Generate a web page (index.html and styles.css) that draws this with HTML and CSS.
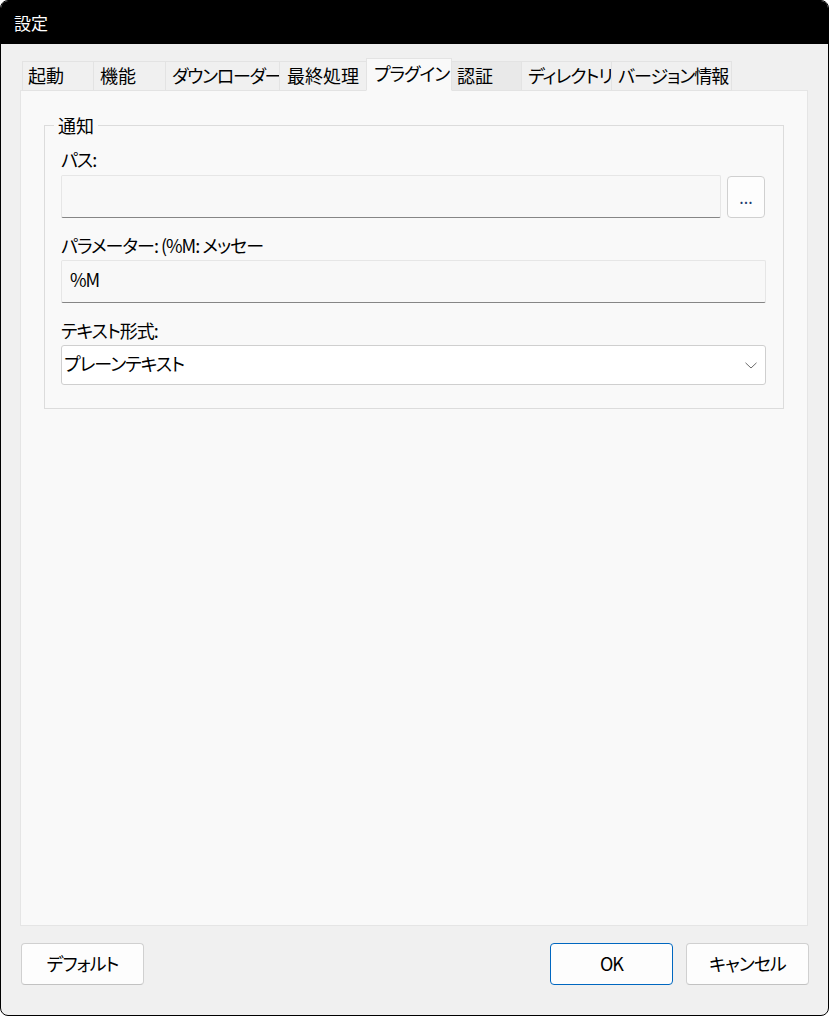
FILE: index.html
```html
<!DOCTYPE html>
<html lang="ja">
<head>
<meta charset="utf-8">
<title>設定</title>
<link rel="stylesheet" href="styles.css">
</head>
<body>
<div class="window">
  <div class="titlebar">設定</div>
  <div class="content">
    <div class="tabstrip">
      <div class="tab t1">起動</div>
      <div class="tab t2">機能</div>
      <div class="tab t3">ダウンローダー</div>
      <div class="tab t4">最終処理</div>
      <div class="tab t5 selected">プラグイン</div>
      <div class="tab t6 hover">認証</div>
      <div class="tab t7">ディレクトリ</div>
      <div class="tab t8">バージョン情報</div>
    </div>
    <div class="panel">
      <fieldset class="group">
        <legend class="legend">通知</legend>
        <div class="label first">パス:</div>
        <div class="row">
          <div class="field path"></div>
          <div class="browse">...</div>
        </div>
        <div class="label">パラメーター: (%M: メッセー</div>
        <div class="field">%M</div>
        <div class="label">テキスト形式:</div>
        <div class="combo">
          <span class="combo-text">プレーンテキスト</span>
          <svg class="chevron" width="12" height="7" viewBox="0 0 12 7"><path d="M0.5 0.8 L6 6 L11.5 0.8" fill="none" stroke="#6b6b6b" stroke-width="1"/></svg>
        </div>
      </fieldset>
    </div>
    <div class="buttons">
      <div class="btn">デフォルト</div>
      <div class="spacer"></div>
      <div class="btn primary">OK</div>
      <div class="btn">キャンセル</div>
    </div>
  </div>
</div>
</body>
</html>
```

FILE: styles.css
```css
html, body {
  margin: 0;
  padding: 0;
  background: #ffffff;
}
body {
  font-family: "Noto Sans CJK JP", "Noto Sans", sans-serif;
  font-feature-settings: "palt";
  letter-spacing: -1px;
  color: #000;
}
.window {
  width: 829px;
  height: 1016px;
  box-sizing: border-box;
  border: 1px solid #000;
  border-radius: 8px;
  overflow: hidden;
  display: flex;
  flex-direction: column;
  background: #f0f0f0;
}
.titlebar {
  height: 43px;
  flex: none;
  background: #000;
  color: #fff;
  font-size: 17px;
  letter-spacing: 0;
  line-height: 43px;
  padding-left: 13px;
}
.content {
  flex: 1;
  display: flex;
  flex-direction: column;
  padding: 14px 20px 30px 19px;
  min-height: 0;
}
.tabstrip {
  display: flex;
  align-items: flex-end;
  margin-left: 2px;
  margin-bottom: -1px;
  position: relative;
  z-index: 1;
  height: 33px;
}
.tab {
  box-sizing: border-box;
  height: 30px;
  margin-right: -1px;
  border: 1px solid #e3e3e3;
  background: #f0f0f0;
  font-size: 18px;
  line-height: 27px;
  padding-left: 6px;
  white-space: nowrap;
}
.tab.hover { background: #e9e9e9; }
.tab.selected {
  height: 33px;
  background: #f9f9f9;
  border-bottom-color: #f9f9f9;
  line-height: 29px;
  position: relative;
  z-index: 2;
}
.t1 { width: 72px; padding-left: 5px; letter-spacing: 0; }
.t2 { width: 73px; padding-left: 6px; letter-spacing: 0; }
.t3 { width: 115px; padding-left: 6px; letter-spacing: -1.3px; }
.t4 { width: 88px; padding-left: 7px; letter-spacing: 0; }
.t5 { width: 86px; padding-left: 7px; }
.t6 { width: 71px; padding-left: 5px; letter-spacing: 0; }
.t7 { width: 91px; padding-left: 6px; }
.t8 { width: 121px; padding-left: 6px; }
.panel {
  flex: 1;
  background: #f9f9f9;
  border: 1px solid #e5e5e5;
  display: flex;
  flex-direction: column;
}
.group {
  margin: 22px 23px 0 23px;
  border: 1px solid #dcdcdc;
  padding: 0 17px 23px 16px;
  display: flex;
  flex-direction: column;
  min-width: 0;
}
.legend {
  font-size: 18px;
  letter-spacing: 0;
  line-height: 24px;
  padding: 0 4px;
  margin-left: -7px;
}
.label {
  font-size: 18px;
  line-height: 24px;
  margin-top: 15px;
  margin-bottom: 3px;
  white-space: nowrap;
}
.label.first {
  margin-top: 10px;
  margin-bottom: 4px;
}
.row {
  display: flex;
  gap: 6px;
  align-items: center;
}
.field {
  box-sizing: border-box;
  height: 43px;
  background: #f8f8f8;
  border: 1px solid #e6e6e6;
  border-bottom-color: #868686;
  border-radius: 2px;
  font-size: 18px;
  line-height: 24px;
  padding: 4px 8px 0 8px;
  display: flex;
  align-items: center;
  padding-bottom: 9px;
}
.field.path { flex: 1; }
.browse {
  box-sizing: border-box;
  width: 38px;
  height: 42px;
  background: #fdfdfd;
  border: 1px solid #d0d0d0;
  border-radius: 4px;
  font-size: 16px;
  letter-spacing: 0;
  color: #1d3a6e;
  display: flex;
  align-items: center;
  justify-content: center;
  padding-top: 1px;
  margin-right: 1px;
}
.combo {
  box-sizing: border-box;
  height: 40px;
  background: #ffffff;
  border: 1px solid #cfcfcf;
  border-radius: 3px;
  display: flex;
  align-items: center;
  padding: 0 8px 5px 2px;
}
.combo-text {
  flex: 1;
  font-size: 18px;
  line-height: 24px;
}
.chevron {
  flex: none;
  margin-top: 5px;
}
.buttons {
  display: flex;
  align-items: center;
  margin-top: 17px;
  margin-right: -1px;
  gap: 13px;
  padding-left: 1px;
}
.spacer { flex: 1; }
.btn {
  box-sizing: border-box;
  width: 123px;
  height: 42px;
  background: #fdfdfd;
  border: 1px solid #d0d0d0;
  border-bottom-color: #c2c2c2;
  border-radius: 4px;
  font-size: 18px;
  line-height: 24px;
  display: flex;
  align-items: center;
  justify-content: center;
  padding-bottom: 2px;
}
.btn.primary {
  border: 1px solid #0067c0;
}
```
